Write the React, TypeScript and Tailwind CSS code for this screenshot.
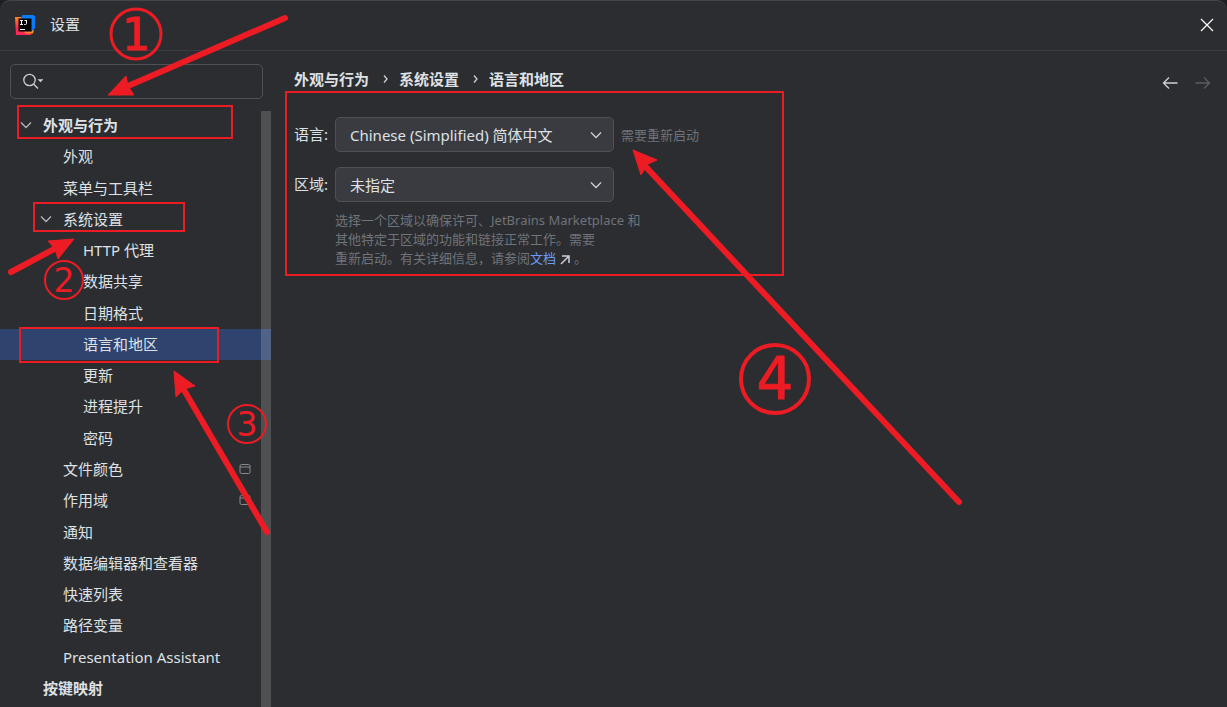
import { useState } from "react";
import { clsx } from "clsx";

type TreeItem = {
  label: string;
  level: 0 | 1 | 2;
  expanded?: boolean;
  project?: boolean;
};

const TREE: TreeItem[] = [
  { label: "外观与行为", level: 0, expanded: true },
  { label: "外观", level: 1 },
  { label: "菜单与工具栏", level: 1 },
  { label: "系统设置", level: 1, expanded: true },
  { label: "HTTP 代理", level: 2 },
  { label: "数据共享", level: 2 },
  { label: "日期格式", level: 2 },
  { label: "语言和地区", level: 2 },
  { label: "更新", level: 2 },
  { label: "进程提升", level: 2 },
  { label: "密码", level: 2 },
  { label: "文件颜色", level: 1, project: true },
  { label: "作用域", level: 1, project: true },
  { label: "通知", level: 1 },
  { label: "数据编辑器和查看器", level: 1 },
  { label: "快速列表", level: 1 },
  { label: "路径变量", level: 1 },
  { label: "Presentation Assistant", level: 1 },
  { label: "按键映射", level: 0 },
];

const INDENT = ["pl-5", "pl-10", "pl-15"];

const CRUMBS = ["外观与行为", "系统设置", "语言和地区"];

const BOXES = [
  { x: 18, y: 106, width: 214, height: 32 },
  { x: 34, y: 203, width: 150, height: 28 },
  { x: 20, y: 328, width: 198, height: 34 },
  { x: 286, y: 92, width: 497, height: 183 },
];

const ARROWS = [
  { line: "M285 18 128 86", head: "108,95 126,76 128,86 134,95" },
  { line: "M11 272 58 247", head: "74,239 58,259 55,249 48,241" },
  { line: "M267 532 184 390", head: "174,371 195,386 184,389 176,397" },
  { line: "M959 502 646 167", head: "633,150 657,160 648,164 641,175" },
];

const STEPS = [
  { n: "1", x: 136, y: 34, r: 25, size: 44, stroke: 3, outline: 1 },
  { n: "2", x: 64, y: 280, r: 19, size: 33, stroke: 2, outline: 0 },
  { n: "3", x: 247, y: 424, r: 19, size: 33, stroke: 2, outline: 0 },
  { n: "4", x: 775, y: 379, r: 34, size: 58, stroke: 4, outline: 1 },
];

function Logo() {
  return (
    <svg viewBox="0 0 20 20" className="size-5" aria-hidden="true">
      <defs>
        <linearGradient id="ij-left" x1="0" y1="0" x2="0.3" y2="1">
          <stop offset="0" stopColor="#ff8a1f" />
          <stop offset="0.6" stopColor="#fe2857" />
        </linearGradient>
      </defs>
      <path d="M0 2h7l10 13.500-1 4.500H10L1 20z" fill="url(#ij-left)" />
      <path d="M9 15h10l-1 3.500H10z" fill="#ff8a1f" />
      <path d="M7.500 0H18.500L20 1.500V13l-4 4L5 5z" fill="#087cfa" />
      <path d="M3.500 3.500h13v13h-13z" fill="#000" />
      <path
        d="M5 5.500h3M5 9.500h3M6.500 5.500v4M9.500 5.500h2M11.500 5v3.500q0 1-1 1h-1.300M5 14.500h5"
        fill="none"
        stroke="#fff"
      />
    </svg>
  );
}

function Chevron({ className }: { className?: string }) {
  return (
    <svg viewBox="0 0 12 12" className={clsx("size-3 shrink-0", className)} aria-hidden="true">
      <path d="M1 3.500 6 8.500 11 3.500" fill="none" stroke="currentColor" strokeWidth="1.300" />
    </svg>
  );
}

function Dropdown({ id, options }: { id: string; options: string[] }) {
  return (
    <div className="relative w-[279px]">
      <select
        id={id}
        className="block h-[35px] w-full appearance-none rounded-[5px] border border-[#4e5157] bg-[#393b40] px-3.5 text-[15px] text-[#dfe1e5] outline-none"
      >
        {options.map((option) => (
          <option key={option}>{option}</option>
        ))}
      </select>
      <Chevron className="pointer-events-none absolute top-3 right-3 text-[#ced0d6]" />
    </div>
  );
}

function Sidebar() {
  const [selected, setSelected] = useState("语言和地区");

  return (
    <aside className="relative flex w-[271px] shrink-0 flex-col">
      <div className="px-2.5 pt-[13px] pb-[11px]">
        <label className="flex h-[35px] w-[253px] items-center rounded-[5px] border border-[#4e5157] pb-px pl-3">
          <svg viewBox="0 0 20 16" className="h-4 w-5 shrink-0" aria-hidden="true">
            <circle cx="6.500" cy="7" r="5.700" fill="none" stroke="#ced0d6" strokeWidth="1.300" />
            <path d="m10.700 11.200 4.300 4.300" stroke="#ced0d6" strokeWidth="1.300" />
            <path d="M14.500 6.300h6L17.500 9.300z" fill="#ced0d6" />
          </svg>
          <input
            type="text"
            aria-label="搜索"
            className="min-w-0 flex-1 bg-transparent px-1 text-[15px] text-[#dfe1e5] outline-none"
          />
        </label>
      </div>

      <ul className="grid flex-1 auto-rows-fr pb-[3px]">
        {TREE.map((item) => (
          <li key={item.label} className={clsx("grid", item.label === selected && "bg-[#2e436e]")}>
            <button
              type="button"
              onClick={() => setSelected(item.label)}
              className={clsx(
                "flex items-center pb-px text-left",
                INDENT[item.level],
                item.level === 0 && "font-bold",
              )}
            >
              <span className="w-[23px] shrink-0">
                {item.expanded && <Chevron className="text-[#b4b8bf]" />}
              </span>
              {item.label}
              {item.project && (
                <svg viewBox="0 0 12 12" className="mr-5 ml-auto size-3" aria-hidden="true">
                  <rect x="1" y="1.500" width="10" height="9" rx="1.500" fill="none" stroke="#868a91" />
                  <path d="M1 4h10" stroke="#868a91" />
                </svg>
              )}
            </button>
          </li>
        ))}
      </ul>

      {/* Scrollbar thumb lies over the rows */}
      <div className="absolute top-15 right-0 bottom-0 w-2.5 bg-white/17" />
    </aside>
  );
}

function LanguagePanel() {
  return (
    <main className="min-w-0 flex-1 pl-[23px]">
      <div className="flex items-start justify-between pt-[18px] pr-4">
        <nav aria-label="位置" className="flex items-center font-bold">
          {CRUMBS.map((crumb, index) => (
            <span key={crumb} className="flex items-center">
              {index > 0 && (
                <svg viewBox="0 0 6 10" className="mr-2.5 ml-3.5 h-2.5 w-1.5" aria-hidden="true">
                  <path d="m1 1.500 3 3.500-3 3.500" fill="none" stroke="#ced0d6" strokeWidth="1.300" />
                </svg>
              )}
              {crumb}
            </span>
          ))}
        </nav>
        <div className="flex gap-[17px] pt-[7px]">
          <button type="button" aria-label="后退" className="text-[#ced0d6]">
            <svg viewBox="0 0 16 14" className="h-3.5 w-4">
              <path d="M15.500 7H1.500M7 1.500 1.500 7 7 12.500" fill="none" stroke="currentColor" strokeWidth="1.300" />
            </svg>
          </button>
          <button type="button" aria-label="前进" disabled className="text-[#5a5d63]">
            <svg viewBox="0 0 16 14" className="h-3.5 w-4">
              <path d="M.5 7h14M9 1.500 14.500 7 9 12.500" fill="none" stroke="currentColor" strokeWidth="1.300" />
            </svg>
          </button>
        </div>
      </div>

      <form className="grid grid-cols-[41px_1fr] items-center gap-y-[15px] pt-[27px]">
        <label htmlFor="language" className="pb-0.5">
          语言:
        </label>
        <div className="flex items-center gap-[7px]">
          <Dropdown id="language" options={["Chinese (Simplified) 简体中文", "English"]} />
          <span className="text-[13px] text-[#6f737a]">需要重新启动</span>
        </div>

        <label htmlFor="region" className="pb-0.5">
          区域:
        </label>
        <Dropdown id="region" options={["未指定", "中国大陆"]} />

        <p className="col-start-2 -mt-1.5 text-[13px] leading-[19px] text-[#6f737a]">
          选择一个区域以确保许可、JetBrains Marketplace 和
          <br />
          其他特定于区域的功能和链接正常工作。需要
          <br />
          重新启动。有关详细信息，请参阅
          <a href="#docs" className="text-[#6b9bfa]">
            文档
            <svg viewBox="0 0 10 10" className="mx-1 inline size-2.5 text-[#ced0d6]" aria-hidden="true">
              <path d="M1 9 9 1M2 1h7v7" fill="none" stroke="currentColor" strokeWidth="1.500" />
            </svg>
          </a>
          。
        </p>
      </form>
    </main>
  );
}

function Annotations() {
  return (
    <svg
      className="pointer-events-none absolute top-0 left-0 h-[707px] w-[1227px] font-['DejaVu_Sans',sans-serif]"
      viewBox="0 0 1227 707"
      fill="none"
      stroke="#ed1c24"
    >
      {BOXES.map((box) => (
        <rect key={box.y} {...box} strokeWidth="2" />
      ))}
      {ARROWS.map((arrow) => (
        <g key={arrow.line}>
          <path d={arrow.line} strokeWidth="6" strokeLinecap="round" />
          <polygon points={arrow.head} fill="#ed1c24" strokeWidth="1" />
        </g>
      ))}
      {STEPS.map((step) => (
        <g key={step.n}>
          <circle cx={step.x} cy={step.y} r={step.r} strokeWidth={step.stroke} />
          <text
            x={step.x}
            y={step.y}
            fontSize={step.size}
            textAnchor="middle"
            dominantBaseline="central"
            fill="#ed1c24"
            strokeWidth={step.outline}
          >
            {step.n}
          </text>
        </g>
      ))}
    </svg>
  );
}

export default function App() {
  return (
    <div className="relative min-h-screen overflow-hidden bg-[#1e1f22] font-['Noto_Sans','Noto_Sans_CJK_SC',sans-serif] text-[15px] leading-5 text-[#dfe1e5]">
      <div className="flex min-h-screen flex-col rounded-t-[10px] border-t border-[#43454a] bg-[#2b2d30]">
        <header className="flex h-[50px] items-center border-b border-[#393b40] pr-[13px] pb-px pl-[15px]">
          <Logo />
          <h1 className="ml-[15px] pb-0.5">设置</h1>
          <button type="button" aria-label="关闭" className="ml-auto">
            <svg viewBox="0 0 14 14" className="size-3.5">
              <path d="m1 1 12 12M13 1 1 13" stroke="#fff" strokeWidth="1.200" />
            </svg>
          </button>
        </header>
        <div className="flex flex-1">
          <Sidebar />
          <LanguagePanel />
        </div>
      </div>
      <Annotations />
    </div>
  );
}
